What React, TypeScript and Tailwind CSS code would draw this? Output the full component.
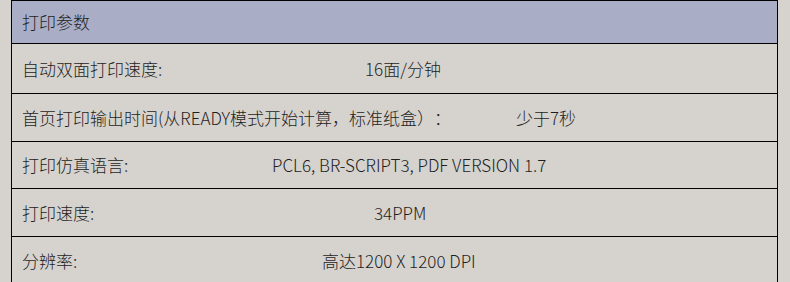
const rows = [
  { label: '自动双面打印速度:', value: '16面/分钟', h: 'h-[50px]', cols: 'grid-cols-[343px_1fr]' },
  {
    label: '首页打印输出时间(从READY模式开始计算，标准纸盒）：',
    value: '少于7秒',
    h: 'h-[48px]',
    cols: 'grid-cols-[494px_1fr]',
  },
  { label: '打印仿真语言:', value: 'PCL6, BR-SCRIPT3, PDF VERSION 1.7', h: 'h-[47px]', cols: 'grid-cols-[250px_1fr]' },
  { label: '打印速度:', value: '34PPM', h: 'h-[48px]', cols: 'grid-cols-[352px_1fr]' },
  { label: '分辨率:', value: '高达1200 X 1200 DPI', h: 'h-[48px]', cols: 'grid-cols-[300px_1fr]' },
];

export default function App() {
  return (
    <div
      className="h-[282px] overflow-hidden bg-[#d6d3ce] text-[17px] font-light text-[#1e1e1e] [text-spacing-trim:space-all]"
      style={{ fontFamily: '"Noto Sans CJK SC", "Noto Sans", sans-serif' }}
    >
      <div className="ml-[11px] w-[767px] border border-black">
        {/* header */}
        <div className="flex h-[43px] items-center border-b border-black bg-[#a9aec6] pl-[10px]">
          打印参数
        </div>
        {rows.map((r) => (
          <div
            key={r.label}
            className={`grid ${r.cols} ${r.h} items-center border-b border-black pl-[10px]`}
          >
            <span className="whitespace-nowrap">{r.label}</span>
            <span className="whitespace-nowrap">{r.value}</span>
          </div>
        ))}
      </div>
    </div>
  );
}
